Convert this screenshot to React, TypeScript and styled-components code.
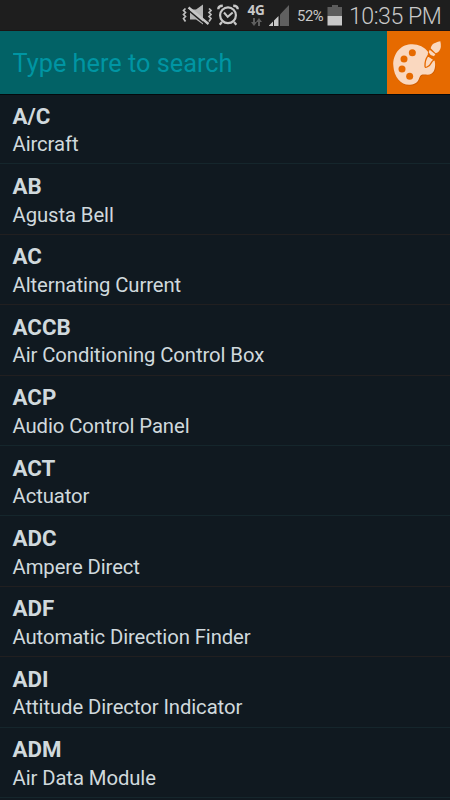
import React from "react";
import styled, { createGlobalStyle } from "styled-components";

const GlobalStyle = createGlobalStyle`
  * { box-sizing: border-box; }
  html, body { margin: 0; background: #101920; }
  body { overflow: hidden; font-family: Roboto, "Noto Sans", sans-serif; }
`;

const Screen = styled.main`
  width: 450px;
  height: 800px;
  overflow: hidden;
  background: #101920;
  display: flex;
  flex-direction: column;
`;

const StatusBar = styled.header`
  height: 31px;
  flex: none;
  display: flex;
  padding-left: 182px;
  background: #1e1e1e;
  color: #c8c8c8;
  border-bottom: 1px solid #1c1414;
`;

const StatusIcon = styled.svg<{ $gap?: number }>`
  display: block;
  flex: none;
  height: 31px;
  margin-left: ${(p) => p.$gap ?? 0}px;
`;

const Network = styled.div`
  width: 18px;
  margin-left: 8px;
  display: flex;
  flex-direction: column;
  align-items: center;
`;

const NetworkLabel = styled.span`
  font: 700 13.5px/16px "Noto Sans", sans-serif;
  height: 18px;
  padding-top: 2px;
  letter-spacing: -0.3px;
`;

const NetworkArrows = styled.svg`
  display: block;
  flex: none;
`;

const Percent = styled.span`
  width: 30px;
  margin-left: 8px;
  font-size: 14.8px;
  line-height: 33px;
  letter-spacing: -0.4px;
  white-space: nowrap;
`;

const Clock = styled.time`
  margin-left: 6px;
  font-size: 23.2px;
  line-height: 32px;
  font-weight: 300;
  letter-spacing: -0.5px;
  white-space: nowrap;
`;

const SearchBar = styled.section`
  height: 64px;
  flex: none;
  display: flex;
  background: #026266;
  border-bottom: 1px solid #03090d;
`;

const SearchInput = styled.input`
  flex: 1;
  min-width: 0;
  padding: 2px 0 0 12.5px;
  border: 0;
  outline: 0;
  background: transparent;
  font: 400 25.3px/60px Roboto, sans-serif;
  color: #fff;
  &::placeholder { color: #0095a3; opacity: 1; }
`;

const PaletteButton = styled.button`
  width: 63px;
  height: 63px;
  padding: 0;
  border: 0;
  background: #e66a00;
  svg { display: block; }
`;

const List = styled.ul`
  margin: -1px 0 0;
  padding: 0;
  list-style: none;
`;

const Row = styled.li<{ $warm: boolean }>`
  height: 70.4px;
  padding: 7.7px 12px 0 12.5px;
  border-bottom: 1px solid ${(p) => (p.$warm ? "#211f20" : "#15262c")};
  color: #d0d9dd;

  &:first-child { background: linear-gradient(#03090d 0 1px, transparent 1px); }
`;

const Term = styled.div`
  font-size: 22.3px;
  line-height: 28px;
  font-weight: 700;
`;

const Meaning = styled.div`
  padding-top: 0.6px;
  font-size: 20.3px;
  line-height: 28px;
  letter-spacing: -0.09px;
  white-space: nowrap;
`;

const entries = [
  ["A/C", "Aircraft"],
  ["AB", "Agusta Bell"],
  ["AC", "Alternating Current"],
  ["ACCB", "Air Conditioning Control Box"],
  ["ACP", "Audio Control Panel"],
  ["ACT", "Actuator"],
  ["ADC", "Ampere Direct"],
  ["ADF", "Automatic Direction Finder"],
  ["ADI", "Attitude Director Indicator"],
  ["ADM", "Air Data Module"],
];
const warmDividers = [1, 2, 3, 6, 7];

const MuteIcon = () => (
  <StatusIcon width="30" viewBox="0 0 30 31">
    <path d="M8 9.5h6l7-5v20l-7-5H8z" fill="#b4b4b4" />
    <path d="M6.5 7.5 26.5 24" stroke="#c8c8c8" strokeWidth="2.4" />
    <path d="M5.5 9.5 24 25" stroke="#1e1e1e" strokeWidth="1.5" />
    <path
      d="M3.5 8.5l-2 2 2 2-2 2 2 2-2 2 2 3M27 8.5l2 2-2 2 2 2-2 2 2 2-2 3"
      stroke="#bcbcbc" strokeWidth="1.7" fill="none"
    />
  </StatusIcon>
);

const AlarmIcon = () => (
  <StatusIcon $gap={5} width="22" viewBox="0 0 22 31" fill="none" stroke="#c8c8c8">
    <circle cx="11" cy="15.3" r="7.9" strokeWidth="2.2" />
    <path d="M7 12.5l3.7 4.3 5-4.3" strokeWidth="2" />
    <path d="M1.3 9.2c0-2 1.5-3.4 4.5-3.4M20.7 9.2c0-2-1.5-3.4-4.5-3.4" strokeWidth="2.4" />
    <path d="M5 22l-2.3 2.7M17 22l2.3 2.7" strokeWidth="2.2" />
  </StatusIcon>
);

const SignalIcon = () => (
  <StatusIcon $gap={4} width="20" viewBox="0 0 20 31">
    <path d="M11 14.5 20 5v21h-9z" fill="#606060" />
    <path d="M0 25.5 4 21.5V26H0zM5 20.5l4.5-4.5v10H5z" fill="#c8c8c8" />
  </StatusIcon>
);

const BatteryIcon = () => (
  <StatusIcon width="16" viewBox="0 0 16 31">
    <path d="M5 5h6v2h4v9H0.5V7H5z" fill="#5c5c5c" />
    <path d="M0.5 16H15v9.5H0.5z" fill="#c8c8c8" />
  </StatusIcon>
);

const PaletteIcon = () => (
  <svg width="63" height="63" viewBox="21 14 189 189">
    <path
      d="M137 77C123 58 108 53 91 54 60 56 38 85 40 118c2 35 24 59 50 57 18-1 24-10 28-21 4-12 12-10 24-10 15 0 24-11 23-27z"
      fill="#b84e00" opacity=".45" transform="translate(2 3)"
    />
    <path
      d="M145 78C133 60 111 52 91 54 60 56 38 85 40 118c2 35 24 59 50 57 18-1 25-10 28-21 4-12 13-9 25-9 17 0 26-17 21-42z"
      fill="#fad8bf"
    />
    <g fill="#e66a00">
      <circle cx="97" cy="79" r="10.5" />
      <circle cx="72" cy="98" r="10.5" />
      <circle cx="66" cy="128" r="10.5" />
      <circle cx="89" cy="150" r="10.5" />
      <path d="M144 77l5-8 22 17-8 17-5-3-15-12z" />
    </g>
    <path
      d="M144 88q-10 14-9 32 0 5 6 2 9-4 13-13 3-5 8-9z"
      fill="#fad8bf" stroke="#e66a00" strokeWidth="4" strokeLinejoin="round"
    />
    <path
      d="M152 66q2-13 15-17 7-3 14-4 5 20-4 30-4 5-10 6zM149 70l17 14-4 6-10-4-6-8z"
      fill="#fad8bf"
    />
  </svg>
);

export default function App() {
  return (
    <>
      <GlobalStyle />
      <Screen>
        <StatusBar>
          <MuteIcon />
          <AlarmIcon />
          <Network>
            <NetworkLabel>4G</NetworkLabel>
            <NetworkArrows width="11" height="8" viewBox="0 0 11 8">
              <path d="M2 0h2v4h2L3 8 0 4h2zM7 8h2V4h2L8 0 5 4h2z" fill="#606060" />
            </NetworkArrows>
          </Network>
          <SignalIcon />
          <Percent>52%</Percent>
          <BatteryIcon />
          <Clock>10:35 PM</Clock>
        </StatusBar>
        <SearchBar>
          <SearchInput placeholder="Type here to search" aria-label="Search" />
          <PaletteButton aria-label="Change theme">
            <PaletteIcon />
          </PaletteButton>
        </SearchBar>
        <List>
          {entries.map(([term, meaning], i) => (
            <Row key={term} $warm={warmDividers.includes(i)}>
              <Term>{term}</Term>
              <Meaning>{meaning}</Meaning>
            </Row>
          ))}
        </List>
      </Screen>
    </>
  );
}
